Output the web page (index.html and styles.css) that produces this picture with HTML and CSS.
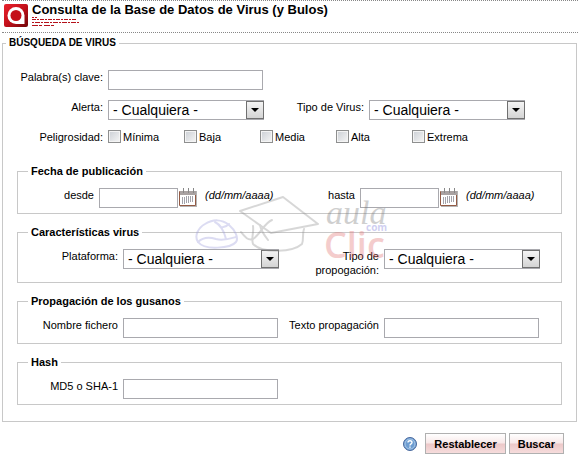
FILE: index.html
```
<!DOCTYPE html>
<html lang="es">
<head>
    <meta charset="UTF-8">
    <meta name="viewport" content="width=device-width, initial-scale=1.0">
    <title>Consulta de la Base de Datos de Virus (y Bulos)</title>
    <link rel="stylesheet" href="styles.css">
</head>
<body>

    <header class="header">
        <svg class="logo" viewBox="0 0 24 24" aria-hidden="true">
            <defs>
                <linearGradient id="logoRed" x1="0" y1="0" x2="1" y2="1">
                    <stop offset="0" stop-color="#e8202c"/>
                    <stop offset="0.5" stop-color="#c4101a"/>
                    <stop offset="1" stop-color="#6e0408"/>
                </linearGradient>
            </defs>
            <rect width="24" height="23" rx="2" fill="url(#logoRed)"/>
            <path d="M12 3a8.500 8.500 0 1 0 0 17h8.500v-8.500a8.500 8.500 0 0 0-8.500-8.500z" fill="#fff"/>
            <circle cx="12" cy="11.500" r="5.500" fill="#c4101a"/>
        </svg>
        <div>
            <h1>Consulta de la Base de Datos de Virus (y Bulos)</h1>
            <svg class="tagline" viewBox="0 0 50 10" aria-hidden="true">
                <g stroke="#b5121b" fill="none">
                    <path d="M0 .5h5" stroke-dasharray="2 1"/>
                    <path d="M0 2.500h44" stroke-dasharray="4 1 2 1"/>
                    <path d="M0 5.500h47" stroke-dasharray="2 1 5 1"/>
                    <path d="M0 8.500h23" stroke-dasharray="6 1 3 2"/>
                </g>
            </svg>
        </div>
    </header>

    <form class="search">
        <!-- General search -->
        <fieldset class="main">
            <legend>BÚSQUEDA DE VIRUS</legend>
            <div class="row">
                <div class="field">
                    <label for="clave">Palabra(s) clave:</label>
                    <input type="text" id="clave">
                </div>
            </div>
            <div class="row">
                <div class="field">
                    <label for="alerta">Alerta:</label>
                    <span class="select"><select id="alerta"><option>- Cualquiera -</option></select></span>
                </div>
                <div class="field wide">
                    <label for="tipo">Tipo de Virus:</label>
                    <span class="select"><select id="tipo"><option>- Cualquiera -</option></select></span>
                </div>
            </div>
            <div class="field" role="group" aria-labelledby="peligrosidad">
                <span class="label" id="peligrosidad">Peligrosidad:</span>
                <label class="check"><input type="checkbox">Mínima</label>
                <label class="check"><input type="checkbox">Baja</label>
                <label class="check"><input type="checkbox">Media</label>
                <label class="check"><input type="checkbox">Alta</label>
                <label class="check"><input type="checkbox">Extrema</label>
            </div>

            <!-- Dates -->
            <fieldset class="group first">
                <legend>Fecha de publicación</legend>
                <div class="row">
                    <div class="field date">
                        <label for="desde">desde</label>
                        <input type="text" id="desde">
                        <svg class="calendar" viewBox="0 0 20 20" aria-hidden="true">
                            <path d="M2 3h17v16H2z" fill="#b5b5b5"/>
                            <path d="M1.500 3.500h16v14h-16z" fill="#fff" stroke="#935a44"/>
                            <path d="M2 3h16v4H2z" fill="#a9a2a2"/>
                            <path d="M5.500 0v5M10.500 0v5M15.500 0v5" stroke="#888"/>
                            <path d="M4.500 9v7M6.500 9v7M8.500 8v7M10.500 8v7M12.500 8v6M14.500 8v6" stroke="#a3a3ab"/>
                        </svg>
                        <em>(dd/mm/aaaa)</em>
                    </div>
                    <div class="field date">
                        <label for="hasta">hasta</label>
                        <input type="text" id="hasta">
                        <svg class="calendar" viewBox="0 0 20 20" aria-hidden="true">
                            <path d="M2 3h17v16H2z" fill="#b5b5b5"/>
                            <path d="M1.500 3.500h16v14h-16z" fill="#fff" stroke="#935a44"/>
                            <path d="M2 3h16v4H2z" fill="#a9a2a2"/>
                            <path d="M5.500 0v5M10.500 0v5M15.500 0v5" stroke="#888"/>
                            <path d="M4.500 9v7M6.500 9v7M8.500 8v7M10.500 8v7M12.500 8v6M14.500 8v6" stroke="#a3a3ab"/>
                        </svg>
                        <em>(dd/mm/aaaa)</em>
                    </div>
                </div>
            </fieldset>

            <!-- Virus features -->
            <fieldset class="group">
                <legend>Características virus</legend>
                <div class="row">
                    <div class="field">
                        <label for="plataforma">Plataforma:</label>
                        <span class="select"><select id="plataforma"><option>- Cualquiera -</option></select></span>
                    </div>
                    <div class="field">
                        <label for="propagacion">Tipo de propogación:</label>
                        <span class="select"><select id="propagacion"><option>- Cualquiera -</option></select></span>
                    </div>
                </div>
            </fieldset>

            <!-- Worms -->
            <fieldset class="group">
                <legend>Propagación de los gusanos</legend>
                <div class="row">
                    <div class="field">
                        <label for="fichero">Nombre fichero</label>
                        <input type="text" id="fichero">
                    </div>
                    <div class="field">
                        <label for="texto">Texto propagación</label>
                        <input type="text" id="texto">
                    </div>
                </div>
            </fieldset>

            <!-- Hash -->
            <fieldset class="group">
                <legend>Hash</legend>
                <div class="field">
                    <label for="hash">MD5 o SHA-1</label>
                    <input type="text" id="hash">
                </div>
            </fieldset>
        </fieldset>

        <div class="actions">
            <svg class="help" viewBox="0 0 14 14" role="img" aria-label="Ayuda">
                <circle cx="7" cy="7" r="6.500" fill="#6d9dd1" stroke="#48689c"/>
                <circle cx="7" cy="7" r="5" fill="none" stroke="#a9c8e8"/>
                <path d="M5 5.500c0-2.500 4-2.300 4 0 0 1.500-2 1.300-2 3M7 9.500v1.300" fill="none" stroke="#fff" stroke-width="1.400"/>
            </svg>
            <button type="reset">Restablecer</button>
            <button type="submit">Buscar</button>
        </div>
    </form>

    <svg class="watermark" viewBox="0 0 200 76" aria-hidden="true">
        <g fill="none" stroke-linejoin="round" stroke-linecap="round">
            <!-- mouse -->
            <g stroke="#9c9cdc" stroke-width="2">
                <path d="M8 50c-4-6 0-14 7-18 8-5 17-5 24 1 6 5 10 13 7 17-5 6-31 9-38 0z"/>
                <path d="M8 50c5-5 12-5 18-3 7 2 13 0 20-2M25 30c6 3 9 9 11 17M31 35c4 1 6-1 8-3"/>
            </g>
            <!-- graduation cap -->
            <g stroke="#909090" stroke-width="2">
                <path d="M50 19l43-14 35 27-47 9z"/>
                <path d="M63 34c1 7-2 12 0 18 10 10 40 8 49 0 2-5 0-10 2-15"/>
                <path d="M82 28c-8 3-12 15-19 19-5 2-8-2-12-7M70 33c1 6 4 10 8 15"/>
            </g>
        </g>
        <text class="wm-aula" x="136" y="32">aula</text>
        <text class="wm-com" x="176" y="39">com</text>
        <text class="wm-clic" x="134" y="66">Clic</text>
    </svg>

</body>
</html>
```
FILE: styles.css
```
body {
    position: relative;
    margin: 0;
    background: #fff;
    color: #000;
    font: 11px/14px "Liberation Sans", Arial, sans-serif;
}
.header {
    display: flex;
    gap: 4px;
    height: 31px;
    margin: 0 2px;
    padding-left: 2px;
    border-top: 1px dotted #888;
    border-bottom: 1px dotted #888;
}
.logo {
    width: 24px;
    height: 24px;
    margin-top: 3px;
}
h1 {
    margin: 0;
    padding-top: 1px;
    font-size: 13px;
    line-height: 15px;
}
.tagline {
    display: block;
    width: 50px;
    height: 10px;
}
fieldset {
    min-width: 0;
    margin: 0;
    border: 1px solid #c8c8c8;
}
legend {
    padding: 0 3px;
    font-weight: bold;
}
.main {
    margin: 3px 3px 0 2px;
    padding: 20px 14px 16px;
}
.main > legend {
    margin-left: -11px;
    font-size: 10px;
}
.row {
    display: grid;
    grid-template-columns: 247px 1fr;
    margin-bottom: 10px;
}
.field {
    display: flex;
    align-items: flex-start;
    gap: 5px;
}
.field > label:first-child,
.label {
    flex: none;
    width: 86px;
    text-align: right;
}
.field.wide > label:first-child {
    width: 100px;
}
input[type="text"],
select {
    box-sizing: border-box;
    width: 155px;
    height: 20px;
    margin: 0;
    padding: 0 4px;
    border: 1px solid #a9a9ae;
    border-radius: 0;
    background: #fff;
    color: #000;
    font-family: inherit;
    font-size: 14px;
}
select {
    display: block;
    width: 156px;
    appearance: none;
}
.select {
    position: relative;
}
/* drop-down button and its arrow */
.select::before {
    content: "";
    position: absolute;
    top: 1px;
    right: 0;
    box-sizing: border-box;
    width: 18px;
    height: 18px;
    border: 1px solid #707070;
    background: linear-gradient(#f4f4f4, #d4d4d4);
    pointer-events: none;
}
.select::after {
    content: "";
    position: absolute;
    top: 8px;
    right: 5px;
    border: 4px solid transparent;
    border-top-color: #000;
    border-bottom: 0;
    pointer-events: none;
}
.check {
    display: flex;
    gap: 2px;
    width: 71px;
}
.check input {
    box-sizing: border-box;
    width: 13px;
    height: 13px;
    margin: 0;
    border: 1px solid #8e8f8f;
    background: linear-gradient(135deg, #cbcfd5, #f6f6f6);
    box-shadow: inset 0 0 0 1px #f4f4f4;
    appearance: none;
}
.check input:checked {
    background: #4b6a94;
}
.group {
    margin-top: 11px;
    padding: 10px 10px 5px;
}
.group.first {
    margin-top: 20px;
}
.group .row {
    grid-template-columns: 261px 1fr;
    margin-bottom: 0;
}
.group .field > label:first-child {
    width: 90px;
}
.group .date > label:first-child {
    width: 66px;
}
.date input[type="text"] {
    width: 79px;
}
.date em {
    margin-left: 2px;
}
.calendar {
    width: 20px;
    height: 20px;
    margin-left: -5px;
}
.actions {
    display: flex;
    align-items: center;
    justify-content: flex-end;
    gap: 3px;
    margin: 11px 16px 0 0;
}
.help {
    width: 14px;
    height: 14px;
    margin-right: 5px;
}
button {
    height: 21px;
    padding: 0 8px;
    border: 1px solid #b0b0b0;
    background: linear-gradient(#fff, #f8e8e8 48%, #ecc8c8 52%, #f6dcdc);
    color: #000;
    font: bold 11px/14px "Liberation Sans", Arial, sans-serif;
    cursor: pointer;
}
.watermark {
    position: absolute;
    top: 192px;
    left: 0;
    right: 0;
    width: 200px;
    height: 76px;
    margin: 0 auto;
    opacity: 0.35;
    pointer-events: none;
}
.wm-aula {
    fill: #777;
    font: italic 34px "Liberation Serif", serif;
}
.wm-com {
    fill: #7878d8;
    font: bold 10px "Open Sans", sans-serif;
}
.wm-clic {
    fill: #e07070;
    font: 600 36px "Open Sans", sans-serif;
}
```
